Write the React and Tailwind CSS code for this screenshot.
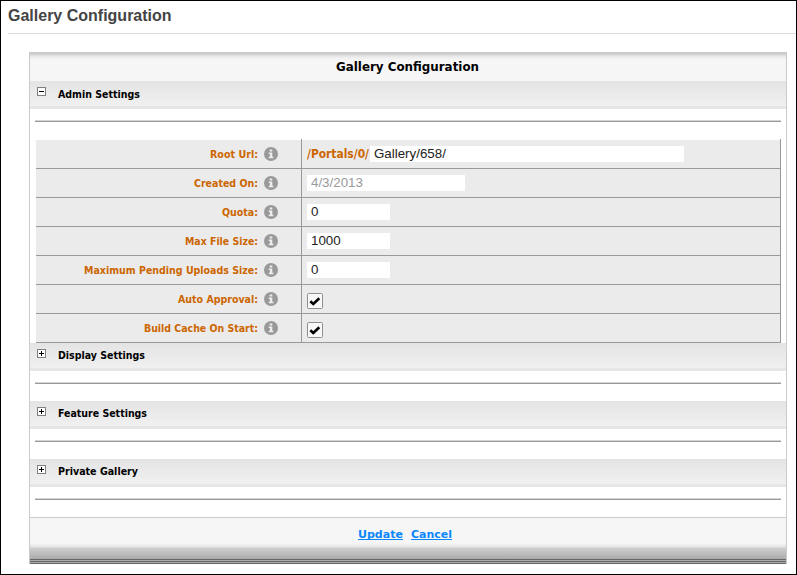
import React from 'react';

const LABEL = "font-['DejaVu_Sans_Condensed','DejaVu_Sans',sans-serif] [font-stretch:condensed] font-bold whitespace-nowrap";
const LINK = "h-[13px] border-b border-[#0c87fb] font-['DejaVu_Sans',sans-serif] [font-stretch:normal] font-bold";

function Info() {
  return (
    <svg className="block h-[14px] w-[14px] shrink-0" viewBox="0 0 14 14">
      <circle cx="7" cy="7" r="7" fill="#999" />
      <path d="M5.7 2.4h2.6v2H5.7zM4.7 5.5h3.6v4.3h1.1v1.5H4.7V9.8h1.2V7H4.7z" fill="#ededed" />
    </svg>
  );
}

function Toggle({ open }) {
  return (
    <svg className="block h-[9px] w-[9px] shrink-0" viewBox="0 0 9 9" shapeRendering="crispEdges">
      <rect x="0.5" y="0.5" width="8" height="8" fill="#fff" stroke="#808080" />
      <path d={open ? 'M2 4h5v1H2z' : 'M2 4h5v1H2zM4 2h1v5H4z'} fill="#000" />
    </svg>
  );
}

function Fit({ width, size, children }) {
  return (
    <svg className="block overflow-visible" width={width} height="14">
      <text x="0" y="11" fontSize={size} textLength={width} lengthAdjust="spacingAndGlyphs" fill="currentColor">{children}</text>
    </svg>
  );
}

function Section({ title, open, width }) {
  return (
    <section className="h-[58px]">
      <div className="flex h-7 items-start border-b-[3px] border-[#e6e6e6] bg-linear-to-b from-[#e4e4e4] to-[#f0f0f0] pl-[7px] pt-[6px]">
        <Toggle open={open} />
        <h2 className={`${LABEL} ml-3 text-[11px] leading-[14px] text-black ${open ? 'mt-0' : '-mt-px'}`}>
          <Fit width={width} size={11.3}>{title}</Fit>
        </h2>
      </div>
      <div className="ml-[5px] mr-[5px] mt-[11px] h-[2px] border-t border-[#d5d5d5] bg-[#999]" />
    </section>
  );
}

function Row({ label, width, children }) {
  return (
    <div className="flex h-[29px] border-b border-[#999] bg-[#ebebeb]">
      <div className="flex w-[266px] shrink-0 items-center justify-end border-r border-[#999] pr-[23px]">
        <label className={`${LABEL} mr-[6px] text-[11px] text-[#cc6600]`}>
          <Fit width={width} size={11.3}>{label}</Fit>
        </label>
        <Info />
      </div>
      <div className="flex grow items-center border-r border-[#999] pl-[5px]">{children}</div>
    </div>
  );
}

function Field({ value, className }) {
  return (
    <input
      readOnly
      value={value}
      className={`h-4 bg-white pl-1 font-['Liberation_Sans',Arial,sans-serif] text-[13.33px] leading-4 outline-none ${className}`}
    />
  );
}

function Check() {
  return (
    <svg className="mt-[4px] block h-4 w-4" viewBox="0 0 16 16">
      <rect x="0.5" y="0.5" width="15" height="15" rx="1" fill="#f8f8f8" stroke="#8e8f8f" />
      <path d="M3.3 8.2L6.3 11L12.3 5.2" fill="none" stroke="#000" strokeWidth="2.6" />
    </svg>
  );
}

export default function App() {
  return (
    <main className="h-[575px] w-[797px] overflow-hidden border border-black bg-white">
      <h1 className="ml-[7px] h-[33px] border-b border-[#ddd] pt-[5px] font-['Liberation_Sans',Arial,sans-serif] text-base font-bold leading-5 text-[#444]">
        Gallery Configuration
      </h1>
      <div className="ml-7 mt-[18px] w-[758px] border-x border-[#ccc]">
        <header className={`${LABEL} flex h-[29px] justify-center bg-[linear-gradient(#cbcbcb_0px,#cccccc_2px,#dadada_3px,#ececec_5px,#f6f6f6_8px)] pr-px pt-[8px] text-black`}>
          <Fit width={143} size={13}>Gallery Configuration</Fit>
        </header>
        <Section title="Admin Settings" open width={82} />
        <div className="ml-[6px] mr-[5px]">
          <div className="flex h-px border-r border-[#999]">
            <div className="w-[266px] border-r border-[#999]" />
          </div>
          <Row label="Root Url:" width={48}>
            <span className={`${LABEL} text-[#cc6600]`}><Fit width={62} size={11.5}>/Portals/0/</Fit></span>
            <Field value="Gallery/658/" className="ml-px w-[314px] text-[#222]" />
          </Row>
          <Row label="Created On:" width={64}>
            <Field value="4/3/2013" className="w-[158px] text-[#999]" />
          </Row>
          <Row label="Quota:" width={36}><Field value="0" className="w-[83px] text-[#222]" /></Row>
          <Row label="Max File Size:" width={73}><Field value="1000" className="w-[83px] text-[#222]" /></Row>
          <Row label="Maximum Pending Uploads Size:" width={174}><Field value="0" className="w-[83px] text-[#222]" /></Row>
          <Row label="Auto Approval:" width={80}><Check /></Row>
          <Row label="Build Cache On Start:" width={114}><Check /></Row>
        </div>
        <Section title="Display Settings" width={87} />
        <Section title="Feature Settings" width={89} />
        <Section title="Private Gallery" width={80} />
        <footer className="border-t border-[#ccc]">
          <div className="flex h-[41px] justify-center gap-[8px] whitespace-nowrap bg-[linear-gradient(#f6f6f6_0px,#f6f6f6_25px,#e5e5e5_29px,#cfcfcf_30px,#aaaaaa_41px)] pr-[6px] pt-[9px] text-[#0c87fb]">
            <a className={LINK}><Fit width={45} size={11.3}>Update</Fit></a>
            <a className={LINK}><Fit width={41} size={11.3}>Cancel</Fit></a>
          </div>
          <div className="h-[5px] bg-[repeating-linear-gradient(#666_0px,#666_1px,#aaa_1px,#aaa_2px)]" />
        </footer>
      </div>
    </main>
  );
}
